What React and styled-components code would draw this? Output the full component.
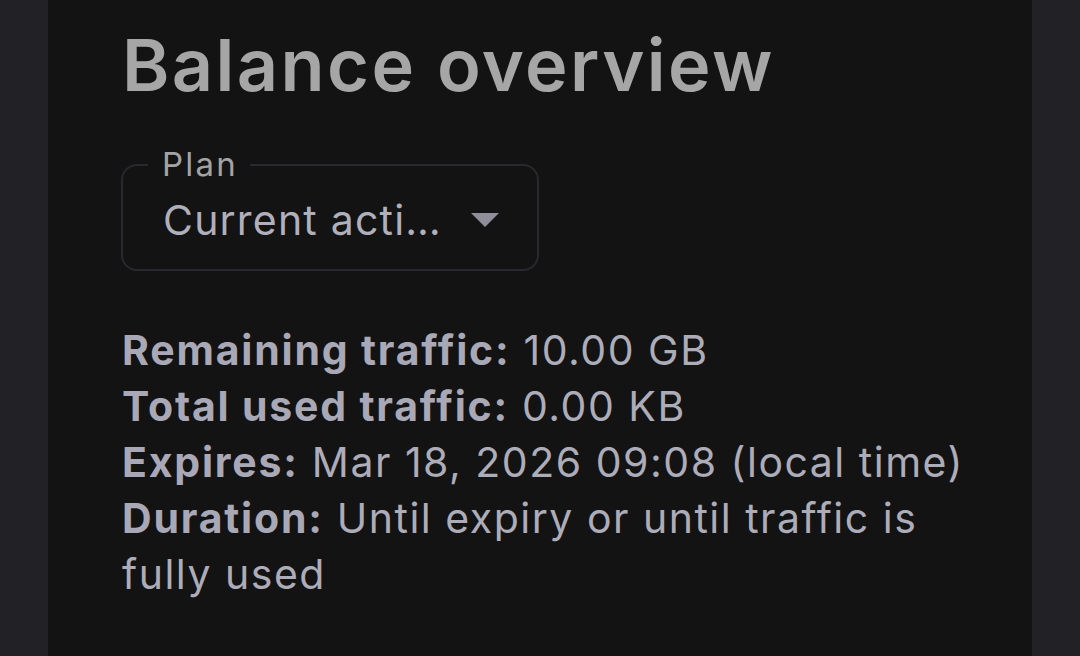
import React from "react";
import styled, { createGlobalStyle } from "styled-components";

const GlobalStyle = createGlobalStyle`
  html, body { margin: 0; padding: 0; height: 100%; }
  body {
    background: #222125;
    font-family: "Inter", "Liberation Sans", sans-serif;
  }
  #root { height: 100%; }
`;

const Shell = styled.div`
  display: flex;
  justify-content: center;
  min-height: 656px;
  height: 100%;
  padding: 0 48px;
  box-sizing: border-box;
`;

const Panel = styled.main`
  flex: 1;
  background: #131314;
  padding: 21px 36px 0 74px;
  box-sizing: border-box;
`;

const Title = styled.h1`
  margin: 0;
  font-size: 72px;
  line-height: 88px;
  font-weight: 600;
  letter-spacing: 2.4px;
  color: #a6a6a6;
`;

const Field = styled.div`
  position: relative;
  margin-top: 55px;
  margin-left: -1px;
  width: 418px;
  height: 107px;
  box-sizing: border-box;
  border: 2px solid #29282c;
  border-radius: 16px;
  display: flex;
  align-items: center;
  padding: 0 38px 0 40px;
`;

const Legend = styled.span`
  position: absolute;
  top: -22px;
  left: 25px;
  padding: 0 12px 0 14px;
  background: #131314;
  font-size: 33px;
  line-height: 40px;
  letter-spacing: 2.2px;
  color: #a3a3a3;
`;

const Value = styled.span`
  flex: 1;
  min-width: 0;
  max-width: 282px;
  white-space: nowrap;
  overflow: hidden;
  text-overflow: ellipsis;
  font-size: 41px;
  line-height: 50px;
  letter-spacing: 1.2px;
  color: #b0afbb;
  margin-top: 4px;
`;

const Caret = styled.svg`
  margin-left: auto;
  flex: none;
  display: block;
  margin-top: 4px;
`;

const Info = styled.div`
  margin-top: 51px;
  font-size: 41px;
  line-height: 56px;
  letter-spacing: 1.5px;
  color: #adacb9;
`;

const Line = styled.p`
  margin: 0;
`;

const Label = styled.strong`
  font-weight: 700;
  letter-spacing: 1.8px;
  color: #a9a8b6;
`;

const rows = [
  ["Remaining traffic:", "10.00 GB"],
  ["Total used traffic:", "0.00 KB"],
  ["Expires:", "Mar 18, 2026 09:08 (local time)"],
  ["Duration:", "Until expiry or until traffic is fully used"],
];

export default function App() {
  return (
    <>
      <GlobalStyle />
      <Shell>
        <Panel>
          <Title>Balance overview</Title>
          <Field>
            <Legend>Plan</Legend>
            <Value>Current active plan</Value>
            <Caret width="28" height="14" viewBox="0 0 28 14" aria-hidden="true">
              <path d="M0 0 H28 L14 14 Z" fill="#908e9a" />
            </Caret>
          </Field>
          <Info>
            {rows.map(([k, v]) => (
              <Line key={k}>
                <Label>{k}</Label> {v}
              </Line>
            ))}
          </Info>
        </Panel>
      </Shell>
    </>
  );
}
